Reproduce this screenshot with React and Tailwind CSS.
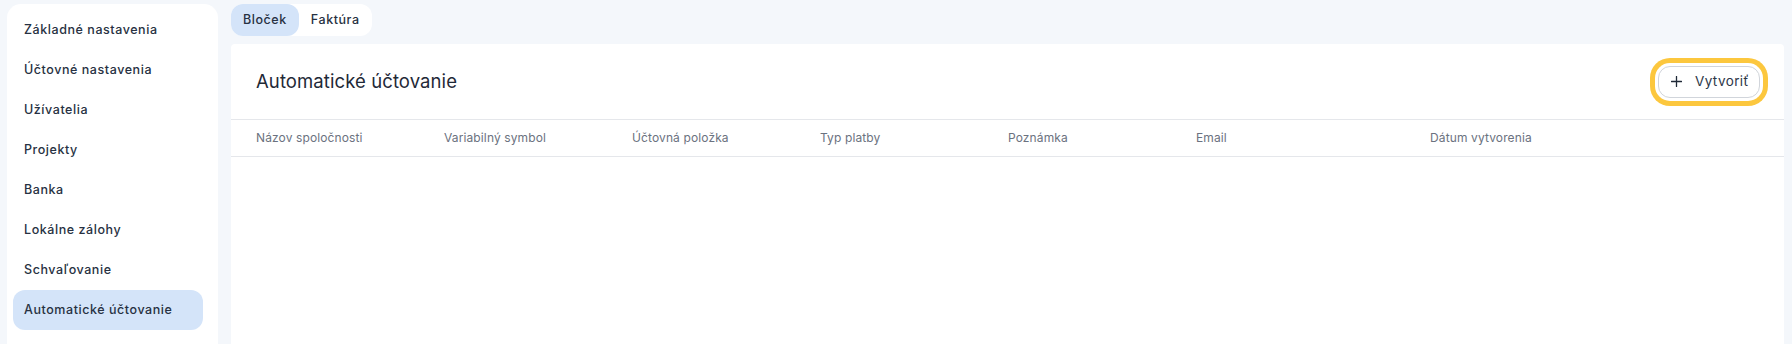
import React from "react";

const navItems = [
  "Základné nastavenia",
  "Účtovné nastavenia",
  "Užívatelia",
  "Projekty",
  "Banka",
  "Lokálne zálohy",
  "Schvaľovanie",
  "Automatické účtovanie",
];

const columns = [
  { label: "Názov spoločnosti", w: "w-[188px]" },
  { label: "Variabilný symbol", w: "w-[188px]" },
  { label: "Účtovná položka", w: "w-[188px]" },
  { label: "Typ platby", w: "w-[188px]" },
  { label: "Poznámka", w: "w-[188px]" },
  { label: "Email", w: "w-[234px]" },
  { label: "Dátum vytvorenia", w: "flex-1" },
];

export default function App() {
  return (
    <div
      className="flex h-[344px] w-[1792px] overflow-hidden bg-[#f4f7fb] pt-[4px] pl-[7px] pr-[8px] text-[#1f2937]"
      style={{ fontFamily: "Inter, 'Noto Sans', sans-serif" }}
    >
      <aside className="h-[360px] w-[211px] shrink-0 rounded-t-[14px] bg-white pt-[6px] pl-[6px] pr-[15px]">
        {navItems.map((item, i) => {
          const active = i === navItems.length - 1;
          return (
            <div
              key={item}
              className={`flex h-[40px] items-center rounded-[12px] pl-[11px] text-[12.5px] font-medium tracking-[0.045em] text-[#273142] ${
                active ? "bg-[#d4e4f9]" : ""
              }`}
            >
              {item}
            </div>
          );
        })}
      </aside>

      <main className="ml-[13px] flex flex-1 flex-col">
        <div className="flex h-[32px] w-fit items-center rounded-[12px] bg-white">
          <div className="flex h-[32px] items-center rounded-[12px] bg-[#d4e4f9] px-[12px] text-[12.5px] font-medium tracking-[0.045em] text-[#273142]">
            Bloček
          </div>
          <div className="flex h-[32px] items-center px-[12px] text-[12.5px] font-medium tracking-[0.045em] text-[#273142]">
            Faktúra
          </div>
        </div>

        <section className="mt-[8px] flex-1 rounded-t-[4px] bg-white">
          <div className="flex h-[76px] items-center justify-between border-b border-[#e5e7eb] pl-[25px] pr-[24px]">
            <h1 className="text-[18.5px] font-normal tracking-[0.005em] text-[#1f2937]">
              Automatické účtovanie
            </h1>
            <button className="flex h-[32px] w-[102px] items-center justify-center gap-[13px] rounded-[12px] border border-[#d1d5db] bg-white pl-[2px] text-[13.5px] font-normal tracking-[0.03em] text-[#2d3748] ring-[5px] ring-[#fcc73e] ring-offset-[3px] ring-offset-white">
              <svg width="11" height="11" viewBox="0 0 11 11" fill="none">
                <path d="M5.5 0.5v10M0.5 5.5h10" stroke="#1f2937" strokeWidth="1.3" strokeLinecap="round" />
              </svg>
              <span>Vytvoriť</span>
            </button>
          </div>

          <div className="flex h-[37px] items-center border-b border-[#e5e7eb] pl-[25px] text-[12px] tracking-[0.01em] text-[#6b7280]">
            {columns.map((c) => (
              <div key={c.label} className={`${c.w} shrink-0`}>
                {c.label}
              </div>
            ))}
          </div>
        </section>
      </main>
    </div>
  );
}
